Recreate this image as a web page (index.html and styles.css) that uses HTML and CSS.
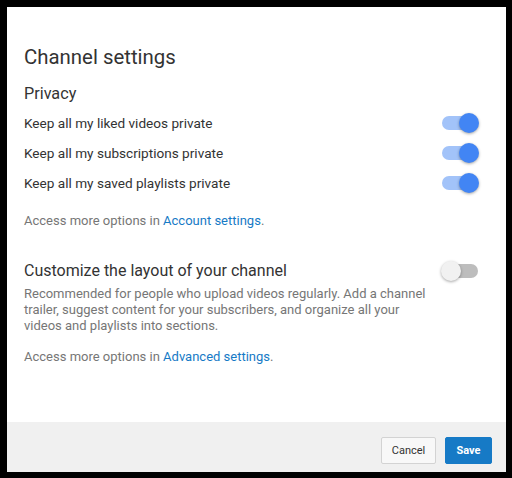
FILE: index.html
```html
<!DOCTYPE html>
<html>
<head>
<meta charset="utf-8">
<link rel="stylesheet" href="styles.css">
</head>
<body>
<div class="dialog">
  <div class="content">
    <h1 class="title">Channel settings</h1>
    <h2 class="section">Privacy</h2>
    <div class="rows">
      <div class="row"><span>Keep all my liked videos private</span><span class="toggle on"><span class="thumb"></span></span></div>
      <div class="row"><span>Keep all my subscriptions private</span><span class="toggle on"><span class="thumb"></span></span></div>
      <div class="row"><span>Keep all my saved playlists private</span><span class="toggle on"><span class="thumb"></span></span></div>
    </div>
    <p class="more">Access more options in <a class="link">Account settings</a>.</p>
    <div class="custom-head"><h2 class="section2">Customize the layout of your channel</h2><span class="toggle off"><span class="thumb"></span></span></div>
    <p class="desc">Recommended for people who upload videos regularly. Add a channel<br>trailer, suggest content for your subscribers, and organize all your<br>videos and playlists into sections.</p>
    <p class="more more2">Access more options in <a class="link">Advanced settings</a>.</p>
  </div>
  <div class="footer">
    <button class="btn cancel">Cancel</button>
    <button class="btn save">Save</button>
  </div>
</div>
</body>
</html>
```
FILE: styles.css
```css
html, body { margin: 0; padding: 0; background: #000; }
body { font-family: Roboto, "Liberation Sans", Arial, sans-serif; }
.dialog {
  margin: 7px 6px 6px 7px;
  height: 465px;
  background: #fff;
  display: flex;
  flex-direction: column;
}
.content { flex: 1; padding: 0 28px 0 17px; }
.title { margin: 38px 0 0; font-size: 20.4px; font-weight: 400; color: #333; line-height: 24px; }
.section { margin: 15px 0 0; font-size: 16.2px; font-weight: 400; color: #333; line-height: 20px; }
.rows { margin-top: 4px; }
.row {
  display: flex; justify-content: space-between; align-items: center;
  height: 30px; font-size: 13.6px; color: #333;
}
.toggle { position: relative; width: 36px; height: 14px; border-radius: 7px; display: inline-block; }
.toggle.on { background: #a2c3f9; }
.toggle.off { background: #bdbdbd; }
.thumb { position: absolute; top: -3px; width: 20px; height: 20px; border-radius: 50%; box-shadow: 0 1px 3px rgba(0,0,0,0.35); }
.on .thumb { right: -1px; background: #4285f4; }
.off .thumb { left: -1px; background: #f1f1f1; }
.more { margin: 14px 0 0; font-size: 13px; color: #767676; line-height: 18px; }
.link { color: #167ac6; text-decoration: none; }
.custom-head { display: flex; justify-content: space-between; align-items: center; margin-top: 31px; }
.section2 { margin: 0; font-size: 16px; font-weight: 400; color: #333; line-height: 20px; }
.desc { margin: 5px 0 0; font-size: 13px; color: #767676; line-height: 16px; white-space: nowrap; }
.more2 { margin-top: 14px; }
.footer {
  height: 50px; box-sizing: border-box; background: #f0f0f0;
  display: flex; justify-content: flex-end; align-items: flex-start;
  padding: 15px 14px 0 0; gap: 9px;
}
.btn { height: 27px; font-family: Roboto, "Liberation Sans", Arial, sans-serif; font-size: 11px; border-radius: 2px; padding: 0 6px; cursor: pointer; }
.cancel { background: #f8f8f8; border: 1px solid #d3d3d3; color: #333; width: 55px; }
.save { background: #167ac6; border: 1px solid #167ac6; color: #fff; font-weight: 700; width: 47px; }
```
